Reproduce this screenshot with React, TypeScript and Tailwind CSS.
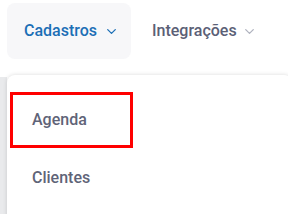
import React from "react";

function Chevron({ className }: { className: string }) {
  return (
    <svg className={className} viewBox="0 0 24 24" fill="none" stroke="currentColor" strokeWidth={2.4} strokeLinecap="round" strokeLinejoin="round">
      <path d="M5 8.5l7 7 7-7" />
    </svg>
  );
}

export default function App() {
  return (
    <div className="w-[288px] h-[214px] overflow-hidden bg-white relative" style={{ fontFamily: "Roboto, 'Liberation Sans', sans-serif" }}>
      <div className="flex items-center h-[60px] pt-[2px]">
        <div className="ml-[7px] h-[56px] w-[124px] rounded-[8px] bg-[#f7f7f9] flex items-center pl-[17px] gap-[8px]">
          <span className="text-[16px] font-medium text-[#1c6fb6]">Cadastros</span>
          <Chevron className="w-[13px] h-[13px] text-[#1c6fb6]" />
        </div>
        <div className="ml-[21px] flex items-center gap-[6px]">
          <span className="text-[16px] font-medium text-[#5b6076]">Integrações</span>
          <Chevron className="w-[13px] h-[13px] text-[#b0b3bf]" />
        </div>
      </div>
      <div className="flex mt-[15px] h-[150px]">
        <div className="w-[7px] bg-[#e9eaec] mt-[2px]" />
        <div className="flex-1 mr-[-4px] bg-white rounded-tl-[8px] rounded-tr-[8px] shadow-[0_0_4px_rgba(0,0,0,0.15)] pt-[17px] pl-[3px]">
          <div className="w-[123px] h-[56px] border-[3px] border-[#ff0000] flex items-center pl-[19px]">
            <span className="text-[16px] font-medium text-[#5f6478]">Agenda</span>
          </div>
          <div className="h-[60px] flex items-center pl-[22px]">
            <span className="text-[16px] font-medium text-[#5f6478]">Clientes</span>
          </div>
        </div>
      </div>
    </div>
  );
}
